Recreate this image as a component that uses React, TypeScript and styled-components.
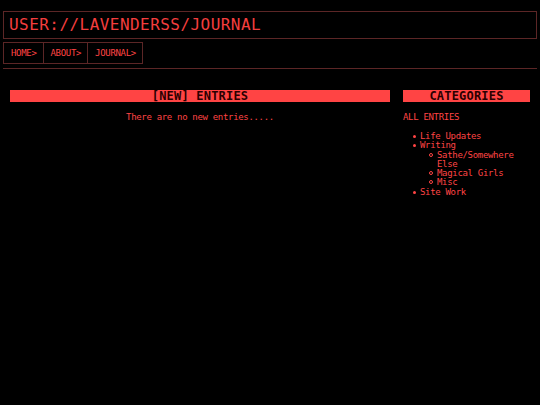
import { FC } from 'react'
import styled, { createGlobalStyle } from 'styled-components'

const RED = '#ff4444'
const DIM = '#5c2626'

const GlobalStyle = createGlobalStyle`
  html, body {
    margin: 0;
    padding: 0;
    background: #000;
  }
  body {
    font-family: 'DejaVu Sans Mono', 'Liberation Mono', monospace;
    color: ${RED};
  }
`

const categories = [
  { name: 'Life Updates' },
  { name: 'Writing', children: ['Sathe/Somewhere Else', 'Magical Girls', 'Misc'] },
  { name: 'Site Work' },
]

const App: FC = () => {
  return (
    <Page>
      <GlobalStyle />
      <Header>
        <SiteTitle>USER://LAVENDERSS/JOURNAL</SiteTitle>
      </Header>
      <Nav>
        <NavButton>HOME&gt;</NavButton>
        <NavButton>ABOUT&gt;</NavButton>
        <NavButton>JOURNAL&gt;</NavButton>
      </Nav>
      <Rule />
      <Columns>
        <Main>
          <SectionBar>[NEW] ENTRIES</SectionBar>
          <EmptyNote>There are no new entries.....</EmptyNote>
        </Main>
        <Sidebar>
          <SectionBar>CATEGORIES</SectionBar>
          <AllLink>ALL ENTRIES</AllLink>
          <CatList>
            {categories.map((c) => (
              <CatItem key={c.name}>
                {c.name}
                {c.children && (
                  <SubList>
                    {c.children.map((s) => (
                      <CatItem key={s} $hollow>
                        {s}
                      </CatItem>
                    ))}
                  </SubList>
                )}
              </CatItem>
            ))}
          </CatList>
        </Sidebar>
      </Columns>
    </Page>
  )
}

const smallText = `
  font-size: 9px;
  letter-spacing: -0.32px;
`

const Page = styled.div`
  width: 540px;
  height: 405px;
  box-sizing: border-box;
  padding: 11px 3px 0;
  background: #000;
  overflow: hidden;
`

const Header = styled.div`
  height: 28px;
  box-sizing: border-box;
  border: 1px solid ${DIM};
  display: flex;
  align-items: center;
  padding-left: 5px;
`

const SiteTitle = styled.h1`
  margin: 0;
  font-size: 16px;
  font-weight: normal;
  letter-spacing: 0.45px;
  color: #f43e3e;
  line-height: 1;
`

const Nav = styled.nav`
  display: flex;
  margin-top: 3px;
`

const NavButton = styled.div`
  height: 22px;
  box-sizing: border-box;
  border: 1px solid ${DIM};
  margin-left: -1px;
  padding: 0 6px 0 7px;
  display: flex;
  align-items: center;
  ${smallText}
  color: ${RED};

  &:first-child {
    margin-left: 0;
  }
`

const Rule = styled.div`
  height: 1px;
  background: ${DIM};
  margin-top: 4px;
`

const Columns = styled.div`
  display: flex;
  gap: 13px;
  padding: 21px 7px 0;
`

const Main = styled.div`
  flex: 0 0 380px;
  display: flex;
  flex-direction: column;
`

const Sidebar = styled.div`
  flex: 0 0 127px;
  display: flex;
  flex-direction: column;
`

const SectionBar = styled.div`
  height: 12px;
  background: ${RED};
  color: #2a0000;
  font-size: 12px;
  font-weight: bold;
  line-height: 12px;
  text-align: center;
  letter-spacing: 0.2px;
`

const EmptyNote = styled.p`
  margin: 10px 0 0;
  ${smallText}
  text-align: center;
  color: ${RED};
`

const AllLink = styled.p`
  margin: 10px 0 0;
  ${smallText}
  color: ${RED};
`

const CatList = styled.ul`
  margin: 10px 0 0;
  padding-left: 0;
  list-style: none;
  ${smallText}
  line-height: 9.3px;
  color: ${RED};
`

const SubList = styled.ul`
  margin: 0;
  padding-left: 0;
  list-style: none;
`

const CatItem = styled.li<{ $hollow?: boolean }>`
  padding-left: 17px;

  &::before {
    content: '';
    display: inline-block;
    box-sizing: border-box;
    vertical-align: 1px;
    border-radius: 50%;
    width: ${(p) => (p.$hollow ? 4 : 3)}px;
    height: ${(p) => (p.$hollow ? 4 : 3)}px;
    margin: 0 4px 0 ${(p) => (p.$hollow ? -8 : -7)}px;
    background: ${(p) => (p.$hollow ? 'transparent' : RED)};
    border: ${(p) => (p.$hollow ? `1px solid ${RED}` : 'none')};
  }
`

export default App
